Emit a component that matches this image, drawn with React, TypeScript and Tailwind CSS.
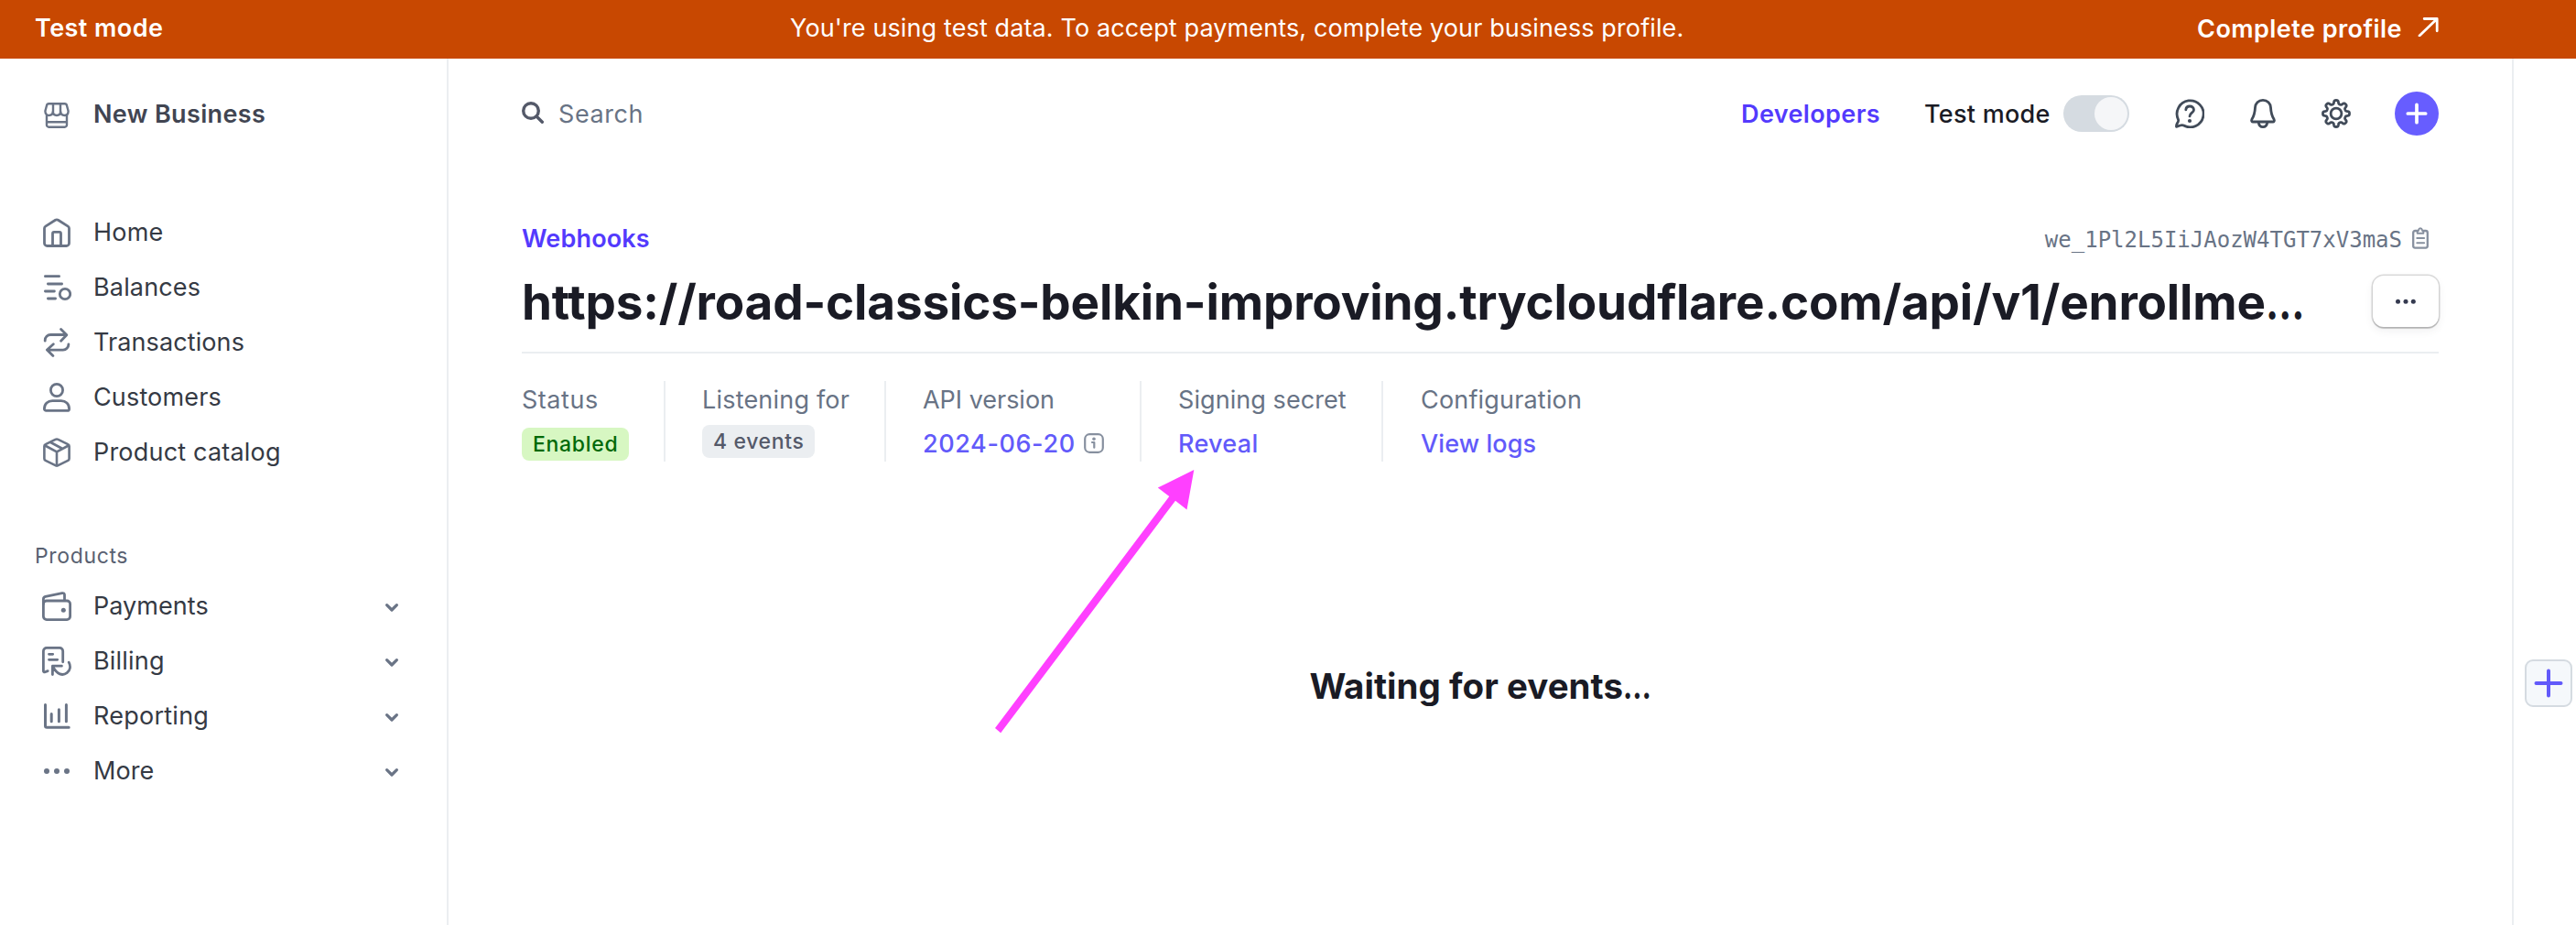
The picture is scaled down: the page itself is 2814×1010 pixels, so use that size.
import type { ReactNode } from "react";

type IconProps = { children: ReactNode; className?: string; size?: number; h?: number; stroke?: number };

function Icon({ children, className = "", size = 32, h = size, stroke = 2.8 }: IconProps) {
  return (
    <svg
      width={size}
      height={h}
      viewBox={`0 0 ${size} ${h}`}
      fill="none"
      stroke="currentColor"
      strokeWidth={stroke}
      strokeLinecap="round"
      strokeLinejoin="round"
      className={`shrink-0 ${className}`}
    >
      {children}
    </svg>
  );
}

const StoreIcon = () => (
  <Icon size={28} stroke={2.4}>
    <path d="M1.4 9.2 3 3.2C3.3 2 4 1.3 5.2 1.3h17.6c1.2 0 1.9.7 2.2 1.9l1.6 6c0 3-1.8 4.8-4.2 4.8s-4-1.6-4.2-3.8c-.2 2.2-1.8 3.8-4.2 3.8s-4-1.6-4.2-3.8C9.6 12.4 7.9 14 5.5 14S1.4 12.2 1.4 9.2Z" />
    <path d="M10 1.8v8.4M18 1.8v8.4M3 14v10.4a2.3 2.3 0 0 0 2.3 2.3h17.4a2.3 2.3 0 0 0 2.3-2.3V14M3.5 21.3h21" />
  </Icon>
);

const HomeIcon = () => (
  <Icon>
    <path d="M2.5 11.3c0-1 .4-1.7 1.2-2.2L14.5 2.3a2.8 2.8 0 0 1 3 0l10.8 6.8c.8.5 1.2 1.2 1.2 2.2v16.2a3 3 0 0 1-3 3h-21a3 3 0 0 1-3-3Z" />
    <path d="M11.5 30V16.9a1.5 1.5 0 0 1 1.5-1.5h6a1.5 1.5 0 0 1 1.5 1.5V30" />
  </Icon>
);

const BalancesIcon = () => (
  <Icon>
    <path d="M3.4 3.7h15.2M6.4 12h15.2M3.4 20h10M6.4 28h8.2" />
    <circle cx="25" cy="23" r="5.7" />
  </Icon>
);

const TransactionsIcon = () => (
  <Icon>
    <path d="M3.2 14.2v-.7a6 6 0 0 1 6-6h17.3M20.6 1.6l6.2 6.100-6.200 6.500" />
    <path d="M28.9 17.8v.3a6 6 0 0 1-6 6H5.6M12.3 17.7l-6.900 6.300 6.500 6.500" />
  </Icon>
);

const CustomersIcon = () => (
  <Icon>
    <circle cx="16" cy="8" r="6.6" />
    <path d="M2.4 28.4c0-5.2 3.8-8.7 8.8-8.7h9.6c5 0 8.8 3.5 8.8 8.7a2 2 0 0 1-2 2H4.4a2 2 0 0 1-2-2Z" />
  </Icon>
);

const CatalogIcon = () => (
  <Icon stroke={2.6}>
    <path d="M14.5 1.9a3.4 3.4 0 0 1 3 0l10.7 5.2c.9.4 1.4 1.2 1.4 2.2v13.4c0 1-.5 1.8-1.4 2.2l-10.7 5.2a3.4 3.4 0 0 1-3 0L3.8 24.900c-.9-.4-1.4-1.200-1.400-2.200V9.300c0-1 .5-1.800 1.400-2.200Z" />
    <path d="M3.2 8.5 16 15.3l12.8-6.8M16 15.3v14.8M9.3 5l13 7" />
  </Icon>
);

const PaymentsIcon = () => (
  <Icon>
    <rect x="1.4" y="10" width="29.2" height="20.6" rx="3.5" />
    <path d="M1.4 13.5V8.2c0-1.5.9-2.5 2.3-2.8l18.2-3.8c1.6-.3 2.6.5 2.6 2V9" />
    <circle cx="23.3" cy="20.3" r="2.5" fill="currentColor" stroke="none" />
  </Icon>
);

const BillingIcon = () => (
  <Icon>
    <path d="M22.7 16.8V4.9a3.5 3.5 0 0 0-3.5-3.5H4.9a3.5 3.5 0 0 0-3.5 3.5v21.5c0 1.2.8 1.8 1.9 1.4l2.9-1.2" />
    <path d="M7.5 8.3h4.2M7.5 14.3h9.2" />
    <path d="M29.2 17.2c2.4 4.6 1.3 9-2 11.5-5 3.7-11 1.7-15.2-6.5M11.4 30.5V21.2h10" />
  </Icon>
);

const ReportingIcon = () => (
  <Icon stroke={3}>
    <path d="M3.5 3.5v23a1.7 1.7 0 0 0 1.7 1.7h24M10.2 13.5v8.3M18.4 8.8v13M26.4 3.5v18.3" />
  </Icon>
);

const MoreIcon = () => (
  <Icon>
    <g fill="currentColor" stroke="none">
      <circle cx="5" cy="16" r="3" />
      <circle cx="16" cy="16" r="3" />
      <circle cx="27" cy="16" r="3" />
    </g>
  </Icon>
);

// Outline of a cog with eight softly rounded teeth.
const gearPath =
  "M" +
  Array.from({ length: 160 }, (_, i) => {
    const a = (i / 160) * Math.PI * 2;
    const r = 12.6 + (1.9 * Math.tanh(2.2 * Math.cos(8 * a))) / Math.tanh(2.2);
    return `${(16 + r * Math.sin(a)).toFixed(2)} ${(16 - r * Math.cos(a)).toFixed(2)}`;
  }).join("L") +
  "Z";

type NavItem = { label: string; icon: ReactNode; track: string };

const mainNav: NavItem[] = [
  { label: "Home", icon: <HomeIcon />, track: "tracking-[0.2px]" },
  { label: "Balances", icon: <BalancesIcon />, track: "tracking-[0.15px]" },
  { label: "Transactions", icon: <TransactionsIcon />, track: "tracking-[0.1px]" },
  { label: "Customers", icon: <CustomersIcon />, track: "tracking-[0.15px]" },
  { label: "Product catalog", icon: <CatalogIcon />, track: "tracking-[0.2px]" },
];

const productNav: NavItem[] = [
  { label: "Payments", icon: <PaymentsIcon />, track: "tracking-[0.05px]" },
  { label: "Billing", icon: <BillingIcon />, track: "tracking-[0.2px]" },
  { label: "Reporting", icon: <ReportingIcon />, track: "tracking-[0.25px]" },
  { label: "More", icon: <MoreIcon />, track: "tracking-[0.1px]" },
];

function NavRow({ item, expandable = false }: { item: NavItem; expandable?: boolean }) {
  return (
    <a className="flex h-[60px] items-center pr-[52px] pl-[46px] text-[#6a7486]">
      {item.icon}
      <span className={`ml-6 text-[27px] leading-[58px] text-[#353a44] ${item.track}`}>{item.label}</span>
      {expandable && (
        <Icon size={16} stroke={3.2} className="mt-px ml-auto">
          <path d="m2.6 5.7 5.4 5.3 5.4-5.3" />
        </Icon>
      )}
    </a>
  );
}

function Sidebar() {
  return (
    <aside className="w-[490px] shrink-0 border-r-2 border-[#ebeef1] pt-[30px]">
      <div className="flex h-[60px] items-center pl-12 text-[#6a7486]">
        <div className="mt-1">
          <StoreIcon />
        </div>
        <span className="ml-[26px] pt-px text-[27px] leading-[59px] font-semibold tracking-[0.35px] text-[#414552]">
          New Business
        </span>
      </div>
      <nav className="mt-[70px]">
        {mainNav.map((n) => (
          <NavRow key={n.label} item={n} />
        ))}
      </nav>
      <h2 className="mt-[63px] mb-[5px] pl-[38px] text-[23px] leading-[40px] tracking-[0.64px] text-[#596171]">
        Products
      </h2>
      <nav>
        {productNav.map((n) => (
          <NavRow key={n.label} item={n} expandable />
        ))}
      </nav>
    </aside>
  );
}

function Banner() {
  return (
    <div className="flex h-16 shrink-0 items-start bg-[#c84801] pr-[150px] pl-[38px] text-[27px] leading-[61px] text-white">
      <span className="w-[825px] font-semibold tracking-[0.45px]">Test mode</span>
      <span className="tracking-[0.12px]">
        You're using test data. To accept payments, complete your business profile.
      </span>
      <a className="ml-auto flex pt-px font-semibold tracking-[0.45px]">
        Complete profile
        <Icon size={24} className="mt-[15px] ml-4">
          <path d="M8.2 4.5h14v13.3M22 4.700 3 23" />
        </Icon>
      </a>
    </div>
  );
}

function TopBar() {
  return (
    <header className="flex h-[120px] items-center">
      <Icon size={24} stroke={3.4} className="-mt-0.5 text-[#545969]">
        <circle cx="10" cy="10" r="8.3" />
        <path d="m16.3 16.3 6 6" />
      </Icon>
      <span className="ml-4 pt-px text-[27px] leading-[41px] tracking-[0.56px] text-[#687385]">Search</span>
      <div className="ml-auto flex items-center text-[27px] leading-[41px]">
        <a className="w-[200px] pt-px font-semibold tracking-[0.38px] text-[#533afd]">Developers</a>
        <span className="w-[152px] pt-px font-medium tracking-[0.29px] text-[#1a1b25]">Test mode</span>
        <div className="flex h-10 w-[72px] justify-end rounded-full bg-[#d5dbe1] p-0.5">
          <div className="size-9 rounded-full bg-[#f5f6f8]" />
        </div>
        <div className="ml-[50px] flex items-center gap-12 text-[#414b59]">
          <Icon>
            <path d="M3.6 22.8A14.5 14.5 0 1 1 9.5 29c-1.3-.7-2.6-.5-4 0l-4 1.4c-.2-1.4.1-2.5.9-3.8.8-1.2 1.5-2.4 1.2-3.8Z" />
            <path d="M11.8 11.8c.2-2.2 2-3.8 4.3-3.8 2.5 0 4.4 1.6 4.4 3.900 0 3.200-4.500 3.400-4.500 7" />
            <circle cx="16" cy="24" r="2.1" fill="currentColor" stroke="none" />
          </Icon>
          <Icon>
            <path d="M16 1.4c-5 0-8.3 3.6-8.5 8-.3 6.500-1.200 9.200-3.700 13.200-.6 1.100.1 2.400 1.300 2.400h21.800c1.200 0 1.900-1.300 1.300-2.400-2.500-4-3.400-6.700-3.700-13.200-.2-4.400-3.500-8-8.500-8Z" />
            <path d="M11.3 26c.4 2.8 2.1 4.6 4.7 4.6s4.3-1.8 4.7-4.6" />
          </Icon>
          <Icon>
            <path d={gearPath} />
            <circle cx="16" cy="16" r="5.9" />
          </Icon>
          <button className="flex size-12 items-center justify-center rounded-full bg-[#675dff] text-white">
            <Icon size={24} stroke={3.7}>
              <path d="M12 2.3v19.4M2.3 12h19.4" />
            </Icon>
          </button>
        </div>
      </div>
    </header>
  );
}

const labelText = "block h-10 text-[27px] leading-[41px] text-[#687385]";
const linkText = "h-10 text-[27px] leading-[41px] font-medium text-[#625afa]";

function Details() {
  return (
    <div className="flex border-t-2 border-[#ebeef1] pt-[30px]">
      <div className="w-[157px] border-r-2 border-[#ebeef1]">
        <span className={`${labelText} tracking-[0.54px]`}>Status</span>
        <div className="mt-[11px] h-9 w-[117px] rounded-lg bg-[#d7f7c2] pl-3 text-[23px] leading-[37px] font-medium tracking-[0.7px] text-[#006908]">
          Enabled
        </div>
      </div>
      <div className="w-[241px] border-r-2 border-[#ebeef1] pl-10">
        <span className={`${labelText} tracking-[0.2px]`}>Listening for</span>
        <div className="mt-2 h-9 w-[123px] rounded-lg bg-[#ebeef1] pl-3 text-[23px] leading-[37px] font-medium tracking-[0.63px] text-[#545969]">
          4 events
        </div>
      </div>
      <div className="w-[279px] border-r-2 border-[#ebeef1] pl-10">
        <span className={`${labelText} tracking-[-0.02px]`}>API version</span>
        <div className="mt-2 flex items-center">
          <span className={`${linkText} w-[176px] tracking-[0.6px]`}>2024-06-20</span>
          <Icon size={22} stroke={2.2} className="text-[#87909f]">
            <rect x="1.2" y="1.2" width="19.6" height="19.6" rx="5" />
            <path d="M9 10h2.3v5.7" />
            <circle cx="11" cy="6.2" r="1.8" fill="currentColor" stroke="none" />
          </Icon>
        </div>
      </div>
      <div className="w-[264px] border-r-2 border-[#ebeef1] pl-10">
        <span className={`${labelText} tracking-[0.07px]`}>Signing secret</span>
        <a className={`${linkText} mt-2 block tracking-[0.3px]`}>Reveal</a>
      </div>
      <div className="pl-[41px]">
        <span className={`${labelText} tracking-[0.18px]`}>Configuration</span>
        <a className={`${linkText} mt-2 block tracking-[0.09px]`}>View logs</a>
      </div>
    </div>
  );
}

function Main() {
  return (
    <main className="relative min-w-0 flex-1 px-20">
      <TopBar />
      <div className="mt-14 flex h-10 items-center justify-between">
        <a className="pt-px text-[27px] leading-[41px] font-semibold tracking-[0.15px] text-[#533afd]">Webhooks</a>
        <div className="flex items-center pr-[11px]">
          <span className="pt-[3px] font-['DejaVu_Sans_Mono',monospace] text-[24px] leading-10 text-[#687385]">
            we_1Pl2L5IiJAozW4TGT7xV3maS
          </span>
          <Icon size={18} h={24} stroke={2.3} className="ml-[11px] text-[#87909f]">
            <path d="M5.5 4H3.2a2 2 0 0 0-2 2v14.6a2 2 0 0 0 2 2h11.6a2 2 0 0 0 2-2V6a2 2 0 0 0-2-2h-2.3" />
            <path
              d="M5.7 4.3c1 0 1.4-.6 1.4-1.3C7.3 1.9 8 1.3 9 1.3s1.7.6 1.9 1.7c0 .7.4 1.3 1.4 1.3v2.5H5.7ZM5.3 12h7.8M5.3 17.2h7.8"
              strokeWidth="2"
            />
          </Icon>
        </div>
      </div>
      <div className="mb-1 flex h-[100px] items-center justify-between">
        <h1 className="text-[53px] leading-[100px] font-bold tracking-[-0.16px] whitespace-nowrap text-[#1a1b25]">
          https://road-classics-belkin-improving.trycloudflare.com/api/v1/enrollme
          <span className="inline-block origin-left scale-x-[0.8]">…</span>
        </h1>
        <button className="-mt-0.5 flex h-14 w-[72px] items-center justify-center rounded-xl bg-white text-[#353a50] shadow-[0_0_0_1.5px_rgba(0,0,0,0.14),0_2px_1px_rgba(0,0,0,0.14),0_4px_10px_rgba(64,68,82,0.08)]">
          <Icon size={24}>
            <g fill="currentColor" stroke="none">
              <circle cx="3.5" cy="12.3" r="2.5" />
              <circle cx="12" cy="12.3" r="2.5" />
              <circle cx="20.3" cy="12.3" r="2.5" />
            </g>
          </Icon>
        </button>
      </div>
      <Details />
      <p className="mt-[215px] pl-[8px] text-center text-[38.5px] leading-[60px] font-bold tracking-[0.02px] text-[#1a1b25]">
        Waiting for events
        <span className="inline-block origin-left scale-x-[0.8]">…</span>
      </p>
      {/* Callout arrow laid over the page, pointing at the signing secret */}
      <svg
        width="220"
        height="290"
        viewBox="0 0 220 290"
        className="pointer-events-none absolute top-[447px] left-[595px]"
      >
        <path
          fill="#ff40ff"
          d="M219.3 2 179.8 21.5 192.3 31 2 284 8.2 289.3 199 35.7 211.5 45.5Z"
        />
      </svg>
    </main>
  );
}

export default function App() {
  return (
    <div className="flex h-[1010px] w-[2814px] flex-col overflow-hidden bg-white font-['Inter',sans-serif] text-[27px]">
      <Banner />
      <div className="flex min-h-0 flex-1">
        <Sidebar />
        <Main />
        <aside className="flex w-[70px] shrink-0 flex-col items-center border-l-2 border-[#ebeef1] pt-[656px] pl-[8px]">
          <button className="flex size-[52px] shrink-0 items-center justify-center rounded-[9px] border-2 border-[#d5dbe1] bg-[#f5f8fb] text-[#625afa]">
            <Icon size={32} stroke={4}>
              <path d="M16 2.5v27M2.5 16h27" />
            </Icon>
          </button>
        </aside>
      </div>
    </div>
  );
}
